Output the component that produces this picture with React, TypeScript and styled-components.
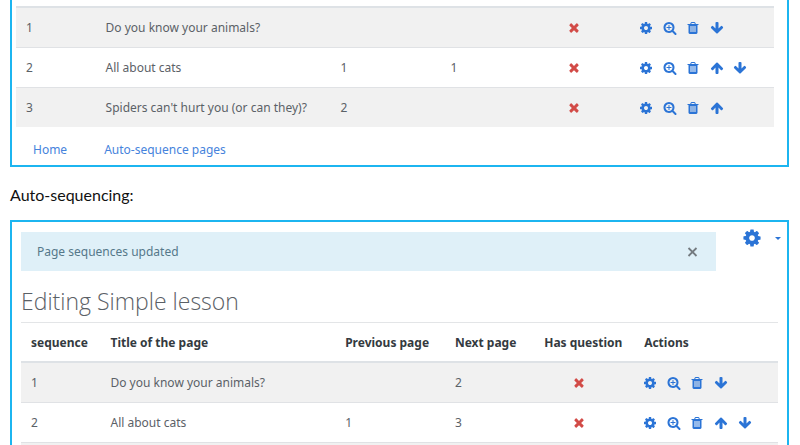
import React from "react";
import styled, { createGlobalStyle, css } from "styled-components";

const GlobalStyle = createGlobalStyle`
  *, *::before, *::after { box-sizing: border-box; }
  body {
    margin: 0;
    background: #fff;
    color: #5b6167;
    font: 12px/19px "Noto Sans", "Open Sans", sans-serif;
  }
`;

const ICONS = {
  cog: "M1152 896q0-106-75-181t-181-75-181 75-75 181 75 181 181 75 181-75 75-181zm512-109v222q0 12-8 23t-20 13l-185 28q-19 54-39 91 35 50 107 138 10 12 10 25t-9 23q-27 37-99 108t-94 71q-12 0-26-9l-138-108q-44 23-91 38-16 136-29 186-7 28-36 28h-222q-14 0-24.5-8.5t-11.5-21.5l-28-184q-49-16-90-37l-141 107q-10 9-25 9-14 0-25-11-126-114-165-168-7-10-7-23 0-12 8-23 15-21 51-66.5t54-70.5q-27-50-41-99l-183-27q-13-2-21-12.5t-8-23.5v-222q0-12 8-23t19-13l186-28q14-46 39-92-40-57-107-138-10-12-10-24 0-10 9-23 26-36 98.5-107.5t94.5-71.5q13 0 26 10l138 107q44-23 91-38 16-136 29-186 7-28 36-28h222q14 0 24.5 8.5t11.5 21.5l28 184q49 16 90 37l142-107q9-9 24-9 13 0 25 10 129 119 165 170 7 8 7 22 0 12-8 23-15 21-51 66.5t-54 70.5q26 50 41 98l183 28q13 2 21 12.5t8 23.5z",
  zoom: "M1088 800v64q0 13-9.5 22.5t-22.5 9.5h-224v224q0 13-9.5 22.5t-22.5 9.5h-64q-13 0-22.5-9.5t-9.5-22.5v-224h-224q-13 0-22.5-9.5t-9.5-22.5v-64q0-13 9.5-22.5t22.5-9.5h224v-224q0-13 9.5-22.5t22.5-9.5h64q13 0 22.5 9.5t9.5 22.5v224h224q13 0 22.5 9.5t9.5 22.5zm128 32q0-185-131.5-316.5t-316.5-131.5-316.5 131.5-131.5 316.5 131.5 316.5 316.5 131.5 316.5-131.5 131.5-316.5zm512 832q0 53-37.5 90.5t-90.5 37.5q-54 0-90-38l-343-342q-179 124-399 124-143 0-273.5-55.5t-225-150-150-225-55.5-273.5 55.5-273.5 150-225 225-150 273.5-55.5 273.5 55.5 225 150 150 225 55.5 273.5q0 220-124 399l343 343q37 37 37 90z",
  trash: "M704 1376v-704q0-14-9-23t-23-9h-64q-14 0-23 9t-9 23v704q0 14 9 23t23 9h64q14 0 23-9t9-23zm256 0v-704q0-14-9-23t-23-9h-64q-14 0-23 9t-9 23v704q0 14 9 23t23 9h64q14 0 23-9t9-23zm256 0v-704q0-14-9-23t-23-9h-64q-14 0-23 9t-9 23v704q0 14 9 23t23 9h64q14 0 23-9t9-23zm-544-992h448l-48-117q-7-9-17-11h-317q-10 2-17 11zm928 32v64q0 14-9 23t-23 9h-96v948q0 83-47 143.5t-113 60.5h-832q-66 0-113-58.5t-47-141.5v-952h-96q-14 0-23-9t-9-23v-64q0-14 9-23t23-9h309l70-167q15-37 54-63t79-26h320q40 0 79 26t54 63l70 167h309q14 0 23 9t9 23z",
  up: "M1675 971q0 51-37 90l-75 75q-38 38-91 38-54 0-90-38l-294-293v704q0 52-37.5 84.5t-90.5 32.5h-128q-53 0-90.5-32.5t-37.5-84.5v-704l-294 293q-36 38-90 38t-90-38l-75-75q-38-38-38-90 0-53 38-91l651-651q35-37 90-37 54 0 91 37l651 651q37 39 37 91z",
  times: "M1490 1258q0 40-28 68l-136 136q-28 28-68 28t-68-28l-294-294-294 294q-28 28-68 28t-68-28l-136-136q-28-28-28-68t28-68l294-294-294-294q-28-28-28-68t28-68l136-136q28-28 68-28t68 28l294 294 294-294q28-28 68-28t68 28l136 136q28 28 28 68t-28 68l-294 294 294 294q28 28 28 68z",
};

type IconName = keyof typeof ICONS | "down";

const Svg = styled.svg`
  display: block;
  fill: currentColor;
`;

function Icon({ name, size = 14 }: { name: IconName; size?: number }) {
  const down = name === "down";
  return (
    <Svg width={size} height={size} viewBox="0 0 1792 1792" aria-hidden="true">
      <path d={ICONS[down ? "up" : name]} transform={down ? "rotate(180 896 896)" : undefined} />
    </Svg>
  );
}

const Page = styled.main`
  padding: 0 11px 0 10px;
`;

const Panel = styled.section<{ $continued?: boolean; $continues?: boolean }>`
  border: 2px solid #1cb5f0;
  padding: 10px 9px;
  ${(p) =>
    p.$continued &&
    css`
      border-top: 0;
      padding: 6px 13px 6px 4px;
    `}
  ${(p) =>
    p.$continues &&
    css`
      border-bottom: 0;
      padding-bottom: 0;
    `}
`;

const Table = styled.table`
  width: 100%;
  table-layout: fixed;
  border-collapse: separate;
  border-spacing: 0;
`;

const Col = styled.col<{ $share?: number }>`
  width: ${(p) => (p.$share ? `${p.$share}%` : "auto")};
`;

const HeadCell = styled.th`
  padding: 10px 0 9px 10px;
  border-top: 1px solid #e3e5e7;
  color: #343a40;
  font-weight: 700;
  text-align: left;
  white-space: nowrap;
`;

const Row = styled.tr`
  &:nth-child(odd) {
    background: #f1f1f1;
  }
  &:first-child > td {
    border-top: 2px solid #dee2e6;
  }
`;

const Cell = styled.td`
  padding: 10px 0 10px 10px;
  border-top: 1px solid #e0e2e5;
  white-space: nowrap;
`;

const RowEdge = styled.td`
  height: 3px;
  padding: 0;
  border-top: 1px solid #e0e2e5;
`;

const Answer = styled.span`
  display: flex;
  justify-content: center;
  padding-right: 21px;
  color: #d24b47;
`;

const Actions = styled.div`
  display: grid;
  grid-template-columns: repeat(5, 1fr);
  width: 118px;
  margin-left: -1px;
`;

const IconButton = styled.button`
  display: flex;
  align-items: center;
  padding: 0;
  border: 0;
  background: none;
  color: #2b74d6;
  cursor: pointer;
`;

const Links = styled.nav`
  display: flex;
  gap: 37px;
  padding: 13px 0 0 17px;
`;

const TextLink = styled.a`
  color: #4683dc;
  text-decoration: none;
`;

const Caption = styled.p`
  margin: 16px 0 13px;
  color: #111;
  font: 16px/24px Lato, sans-serif;
`;

const TopBar = styled.header`
  display: flex;
  align-items: flex-start;
`;

const Alert = styled.div`
  flex: 1;
  display: flex;
  align-items: center;
  justify-content: space-between;
  padding: 10px 18px 10px 16px;
  background: #dff0f8;
  color: #55788a;
`;

const CloseButton = styled(IconButton)`
  color: #747b80;
`;

const MenuButton = styled(IconButton)`
  gap: 12px;
  width: 66px;
  margin: -4px -4px 0 0;
  justify-content: flex-end;
`;

const Title = styled.h1`
  margin: 11px 0 2px;
  color: #5a6066;
  font: 300 23px/38px "Open Sans", "Noto Sans", sans-serif;
`;

interface LessonPage {
  seq: number;
  title: string;
  prev?: number;
  next?: number;
  actions: IconName[];
}

const LABELS: Record<string, string> = {
  cog: "Edit",
  zoom: "Preview",
  trash: "Delete",
  up: "Move up",
  down: "Move down",
};

const before: LessonPage[] = [
  { seq: 1, title: "Do you know your animals?", actions: ["cog", "zoom", "trash", "down"] },
  { seq: 2, title: "All about cats", prev: 1, next: 1, actions: ["cog", "zoom", "trash", "up", "down"] },
  { seq: 3, title: "Spiders can't hurt you (or can they)?", prev: 2, actions: ["cog", "zoom", "trash", "up"] },
];

const after: LessonPage[] = [
  { ...before[0], next: 2 },
  { ...before[1], prev: 1, next: 3 },
];

const HEADINGS = ["sequence", "Title of the page", "Previous page", "Next page", "Has question", "Actions"];

function PageTable({ pages, head, more }: { pages: LessonPage[]; head?: boolean; more?: boolean }) {
  return (
    <Table aria-label="Lesson pages">
      <colgroup>
        <Col $share={10.5} />
        <Col $share={31} />
        <Col $share={14.5} />
        <Col $share={11.8} />
        <Col $share={13.2} />
        <Col />
      </colgroup>
      {head && (
        <thead>
          <tr>
            {HEADINGS.map((h) => (
              <HeadCell key={h} scope="col">{h}</HeadCell>
            ))}
          </tr>
        </thead>
      )}
      <tbody>
        {pages.map((p) => (
          <Row key={p.seq}>
            <Cell>{p.seq}</Cell>
            <Cell>{p.title}</Cell>
            <Cell>{p.prev}</Cell>
            <Cell>{p.next}</Cell>
            <Cell>
              <Answer role="img" aria-label="No"><Icon name="times" /></Answer>
            </Cell>
            <Cell>
              <Actions>
                {p.actions.map((a) => (
                  <IconButton key={a} type="button" aria-label={LABELS[a]}><Icon name={a} /></IconButton>
                ))}
              </Actions>
            </Cell>
          </Row>
        ))}
        {more && (
          <Row aria-hidden="true">
            <RowEdge colSpan={6} />
          </Row>
        )}
      </tbody>
    </Table>
  );
}

export default function App() {
  return (
    <>
      <GlobalStyle />
      <Page>
        <Panel $continued>
          <PageTable pages={before} />
          <Links>
            <TextLink href="#home">Home</TextLink>
            <TextLink href="#auto-sequence">Auto-sequence pages</TextLink>
          </Links>
        </Panel>
        <Caption>Auto-sequencing:</Caption>
        <Panel $continues>
          <TopBar>
            <Alert role="status">
              Page sequences updated
              <CloseButton type="button" aria-label="Dismiss">
                <Svg width="11" height="11" viewBox="0 0 11 11" aria-hidden="true">
                  <path d="M1.5 2l8 8M9.5 2l-8 8" stroke="currentColor" strokeWidth="1.8" />
                </Svg>
              </CloseButton>
            </Alert>
            <MenuButton type="button" aria-label="Lesson settings">
              <Icon name="cog" size={20} />
              <Svg width="8" height="4" viewBox="0 0 8 4" aria-hidden="true">
                <path d="M1 1h6L4 4z" />
              </Svg>
            </MenuButton>
          </TopBar>
          <Title>Editing Simple lesson</Title>
          <PageTable pages={after} head more />
        </Panel>
      </Page>
    </>
  );
}
